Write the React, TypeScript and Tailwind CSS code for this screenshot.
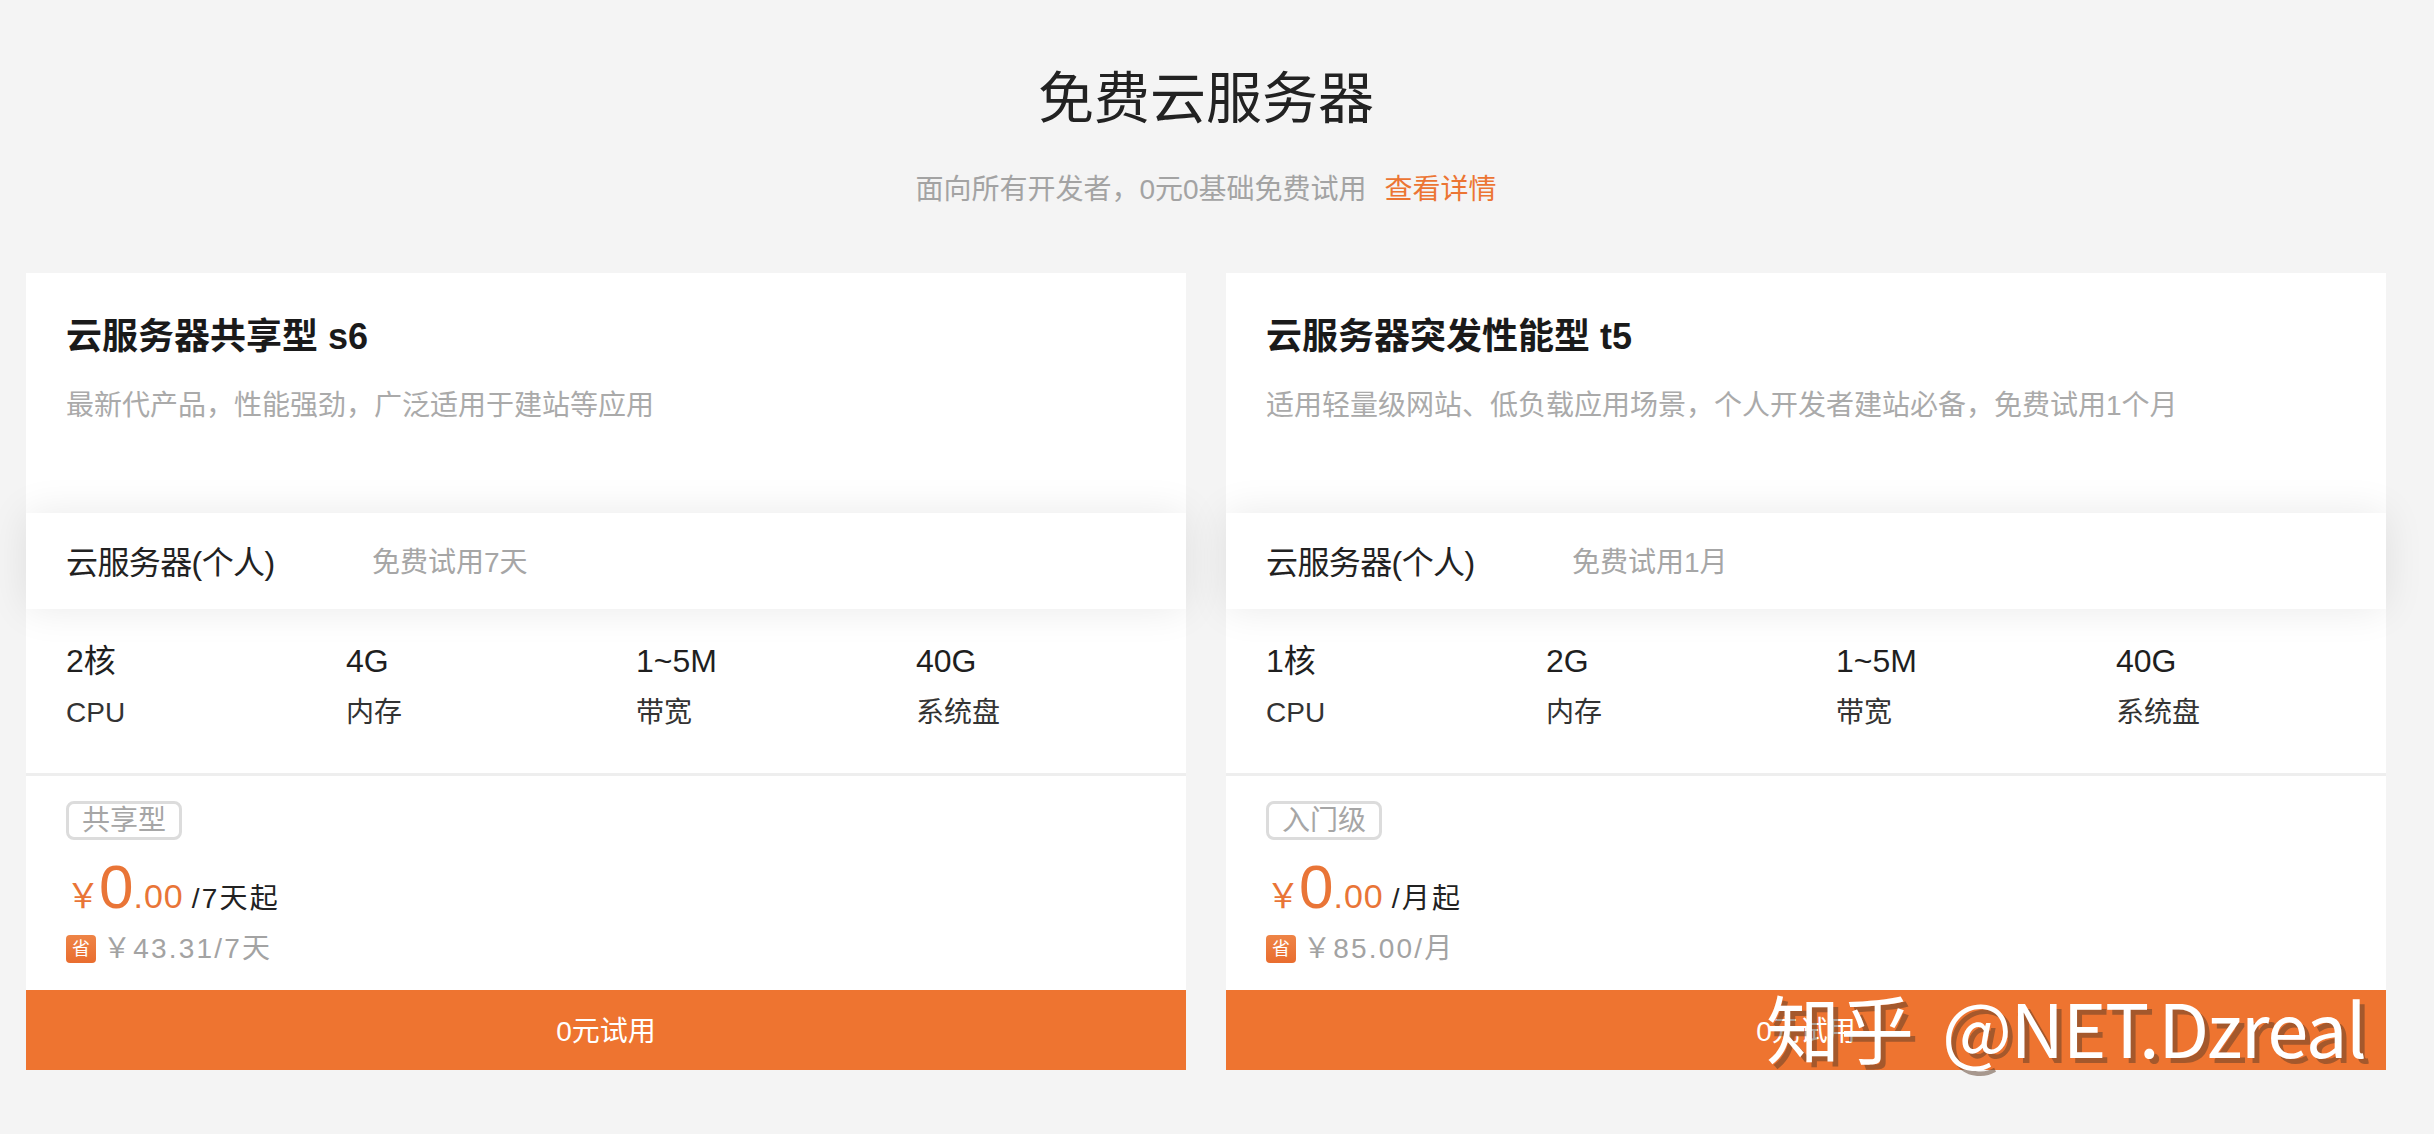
const fontStack = "font-['Liberation_Sans','Noto_Sans_CJK_SC',sans-serif]";

type Plan = {
  name: string;
  desc: string;
  trial: string;
  specs: [string, string][];
  tag: string;
  unit: string;
  was: string;
};

const plans: Plan[] = [
  {
    name: "云服务器共享型 s6",
    desc: "最新代产品，性能强劲，广泛适用于建站等应用",
    trial: "免费试用7天",
    specs: [
      ["2核", "CPU"],
      ["4G", "内存"],
      ["1~5M", "带宽"],
      ["40G", "系统盘"],
    ],
    tag: "共享型",
    unit: "/7天起",
    was: "￥43.31/7天",
  },
  {
    name: "云服务器突发性能型 t5",
    desc: "适用轻量级网站、低负载应用场景，个人开发者建站必备，免费试用1个月",
    trial: "免费试用1月",
    specs: [
      ["1核", "CPU"],
      ["2G", "内存"],
      ["1~5M", "带宽"],
      ["40G", "系统盘"],
    ],
    tag: "入门级",
    unit: "/月起",
    was: "￥85.00/月",
  },
];

function PlanCard({ plan }: { plan: Plan }) {
  return (
    <div className="flex w-[1160px] flex-col bg-white">
      <div className="h-[240px] px-10 pt-[42px]">
        <h2 className="text-[36px] leading-[44px] font-bold text-[#1a1a1a]">{plan.name}</h2>
        <p className="mt-[27px] text-[28px] leading-[40px] text-[#aaaaaa]">{plan.desc}</p>
      </div>

      <div className="relative z-10 flex h-[96px] items-center bg-white px-10 pt-[3px] shadow-[0_0_40px_rgba(0,0,0,0.09)]">
        <span className="w-[306px] text-[32px] tracking-[-0.6px] text-[#222222]">云服务器(个人)</span>
        <span className="text-[28px] text-[#a6a6a6]">{plan.trial}</span>
      </div>

      <div className="grid h-[167px] grid-cols-[280px_290px_280px_1fr] border-b-[3px] border-[#eeeeee] px-10 pt-[32px]">
        {plan.specs.map(([value, label]) => (
          <div key={label}>
            <div className="text-[32px] leading-[40px] text-[#1f1f1f]">{value}</div>
            <div className="mt-[12px] text-[28px] leading-[40px] text-[#333333]">{label}</div>
          </div>
        ))}
      </div>

      <div className="h-[214px] px-10 pt-[25px]">
        <span className="flex h-[39px] w-[116px] items-center justify-center rounded-lg border-[3px] border-[#dcdcdc] text-[28px] text-[#a6a6a6]">
          {plan.tag}
        </span>
        <div className="mt-[16px] flex h-[62px] items-baseline text-[#e97537]">
          <span className="w-[33px] text-[34px]">￥</span>
          <span className="text-[62px] leading-[62px]">0</span>
          <span className="text-[34px] tracking-[1px]">.00</span>
          <span className="ml-2 text-[28px] tracking-[2.2px] text-[#222222]">{plan.unit}</span>
        </div>
        <div className="mt-[13px] flex items-center">
          <span className="flex h-[28px] w-[30px] items-center justify-center rounded-[4px] bg-gradient-to-b from-[#ee8446] to-[#e96d2f] text-[18px] text-white">
            省
          </span>
          <span className="ml-[7px] text-[28px] leading-[36px] tracking-[2.2px] text-[#a3a3a3]">{plan.was}</span>
        </div>
      </div>

      <button type="button" className="h-[80px] bg-[#ee7430] pt-1 text-[28px] text-white">
        0元试用
      </button>
    </div>
  );
}

export default function App() {
  return (
    <div className={`relative h-[1134px] w-[2434px] overflow-hidden bg-[#f4f4f4] ${fontStack}`}>
      <div className="ml-[26px] w-[2360px]">
        <header className="flex h-[273px] flex-col items-center pt-[57px]">
          <h1 className="text-[56px] leading-[84px] font-normal text-[#222222]">免费云服务器</h1>
          <p className="mt-[29px] text-[28px] leading-[40px] text-[#a3a3a3]">
            面向所有开发者，0元0基础免费试用
            <a className="ml-[18px] text-[#ec7533]">查看详情</a>
          </p>
        </header>
        <div className="flex gap-[40px]">
          {plans.map((plan) => (
            <PlanCard key={plan.name} plan={plan} />
          ))}
        </div>
      </div>

      <div className="pointer-events-none absolute top-[976px] left-[1766px] z-20 flex font-['Noto_Sans_CJK_SC',sans-serif] text-[74px] leading-[100px] whitespace-nowrap text-white [text-shadow:5px_5px_0_rgba(90,60,40,0.5)]">
        <span>知乎</span>
        <span className="ml-[28px] tracking-[-1.4px]">@NET.Dzreal</span>
      </div>
    </div>
  );
}
